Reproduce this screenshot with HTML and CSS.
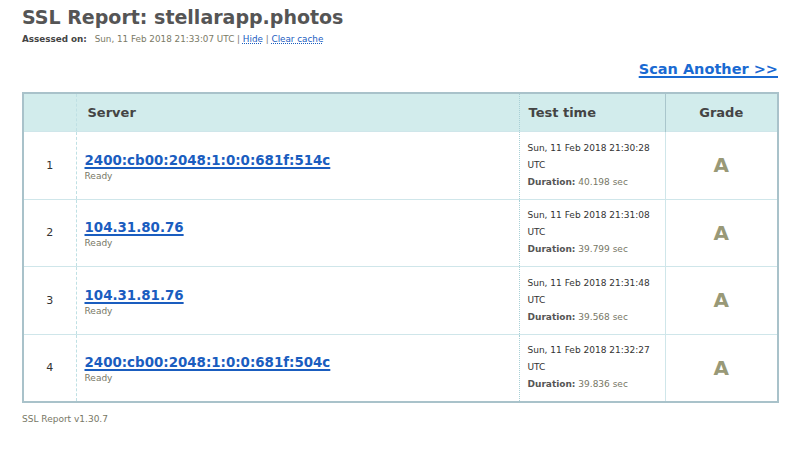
FILE: index.html
```html
<!DOCTYPE html>
<html>
<head>
<meta charset="utf-8">
<link rel="stylesheet" href="styles.css">
</head>
<body>
<div class="page">
  <h1 class="title">SSL Report: stellarapp.photos</h1>
  <div class="assessed"><span class="label">Assessed on:</span> <span class="date">Sun, 11 Feb 2018 21:33:07 UTC</span> | <a href="#">Hide</a> | <a href="#">Clear cache</a></div>
  <div class="scan-row"><a class="scan" href="#">Scan Another &gt;&gt;</a></div>
  <table class="report">
    <colgroup>
      <col class="w-num">
      <col class="w-server">
      <col class="w-time">
      <col class="w-grade">
    </colgroup>
    <thead>
      <tr>
        <th class="c-num"></th>
        <th class="c-server">Server</th>
        <th class="c-time">Test time</th>
        <th class="c-grade">Grade</th>
      </tr>
    </thead>
    <tbody>
      <tr>
        <td class="c-num">1</td>
        <td class="c-server"><a class="ip" href="#">2400:cb00:2048:1:0:0:681f:514c</a><div class="status">Ready</div></td>
        <td class="c-time"><div class="when">Sun, 11 Feb 2018 21:30:28 UTC</div><div class="dur"><b>Duration:</b> 40.198 sec</div></td>
        <td class="c-grade">A</td>
      </tr>
      <tr>
        <td class="c-num">2</td>
        <td class="c-server"><a class="ip" href="#">104.31.80.76</a><div class="status">Ready</div></td>
        <td class="c-time"><div class="when">Sun, 11 Feb 2018 21:31:08 UTC</div><div class="dur"><b>Duration:</b> 39.799 sec</div></td>
        <td class="c-grade">A</td>
      </tr>
      <tr>
        <td class="c-num">3</td>
        <td class="c-server"><a class="ip" href="#">104.31.81.76</a><div class="status">Ready</div></td>
        <td class="c-time"><div class="when">Sun, 11 Feb 2018 21:31:48 UTC</div><div class="dur"><b>Duration:</b> 39.568 sec</div></td>
        <td class="c-grade">A</td>
      </tr>
      <tr>
        <td class="c-num">4</td>
        <td class="c-server"><a class="ip" href="#">2400:cb00:2048:1:0:0:681f:504c</a><div class="status">Ready</div></td>
        <td class="c-time"><div class="when">Sun, 11 Feb 2018 21:32:27 UTC</div><div class="dur"><b>Duration:</b> 39.836 sec</div></td>
        <td class="c-grade">A</td>
      </tr>
    </tbody>
  </table>
  <div class="footer">SSL Report v1.30.7</div>
</div>
</body>
</html>
```
FILE: styles.css
```css
html, body {
  margin: 0;
  padding: 0;
  background: #fff;
}
body {
  font-family: "DejaVu Sans", Verdana, sans-serif;
  color: #333;
}
.page {
  padding: 4px 22px 0 22px;
}
.title {
  margin: 0;
  font-size: 19px;
  font-weight: bold;
  color: #555;
  line-height: 26px;
}
.assessed {
  font-size: 8.8px;
  line-height: 14px;
  margin-top: 2px;
  color: #777;
}
.assessed .label {
  font-weight: bold;
  color: #444;
  margin-right: 5px;
}
.assessed .date {
  color: #7a7a66;
}
.assessed a {
  color: #1a5dbf;
  text-decoration: underline dotted;
}
.scan-row {
  display: flex;
  justify-content: flex-end;
  margin-top: 13px;
  height: 20px;
}
.scan {
  font-size: 14.5px;
  font-weight: bold;
  color: #1a6ad2;
  text-decoration: underline;
  text-decoration-thickness: 2px;
  text-underline-offset: 2px;
  line-height: 20px;
}
.report {
  margin-top: 13px;
  width: 755px;
  border-collapse: collapse;
  border: 2px solid #a9c2ca;
  table-layout: fixed;
}
.w-num { width: 53px; }
.w-server { width: 443px; }
.w-time { width: 146px; }
.w-grade { width: 113px; }
.report th {
  background: #d2ecec;
  height: 37px;
  font-size: 13px;
  font-weight: bold;
  color: #444;
  text-align: left;
  padding: 0 0 0 11px;
  border-bottom: 1px dotted #b9d0d4;
}
.report th.c-num {
  padding: 0;
}
.report th.c-grade {
  text-align: center;
  padding: 0;
}
.report td {
  border-top: 1px solid #cfe6ea;
  height: 66.5px;
  padding: 0;
  vertical-align: middle;
}
.c-num {
  text-align: center;
  font-size: 11px;
  color: #333;
  border-right: 1px dashed #bfe0e4;
}
.c-server {
  border-right: 1px dotted #a8d0d6;
}
.report td.c-server {
  padding-left: 8px;
}
.c-time {
  border-right: 1px solid #a9c6cc;
}
.report td.c-time {
  border-right-color: #cfe6ea;
  padding-left: 8px;
  font-size: 9px;
  line-height: 17px;
  color: #333;
}
.report th.c-time {
  padding-left: 9px;
}
.ip {
  font-size: 13.4px;
  font-weight: bold;
  color: #1a5dbf;
  text-decoration: underline;
  text-decoration-thickness: 2px;
  text-underline-offset: 2px;
}
.status {
  font-size: 9px;
  color: #777766;
  margin-top: 2px;
}
.when {
  width: 128px;
}
.dur {
  color: #777766;
}
.dur b {
  color: #555;
}
.report td.c-grade {
  text-align: center;
  font-size: 20px;
  font-weight: bold;
  color: #999977;
}
.footer {
  margin-top: 11px;
  font-size: 9px;
  color: #777766;
}
```
